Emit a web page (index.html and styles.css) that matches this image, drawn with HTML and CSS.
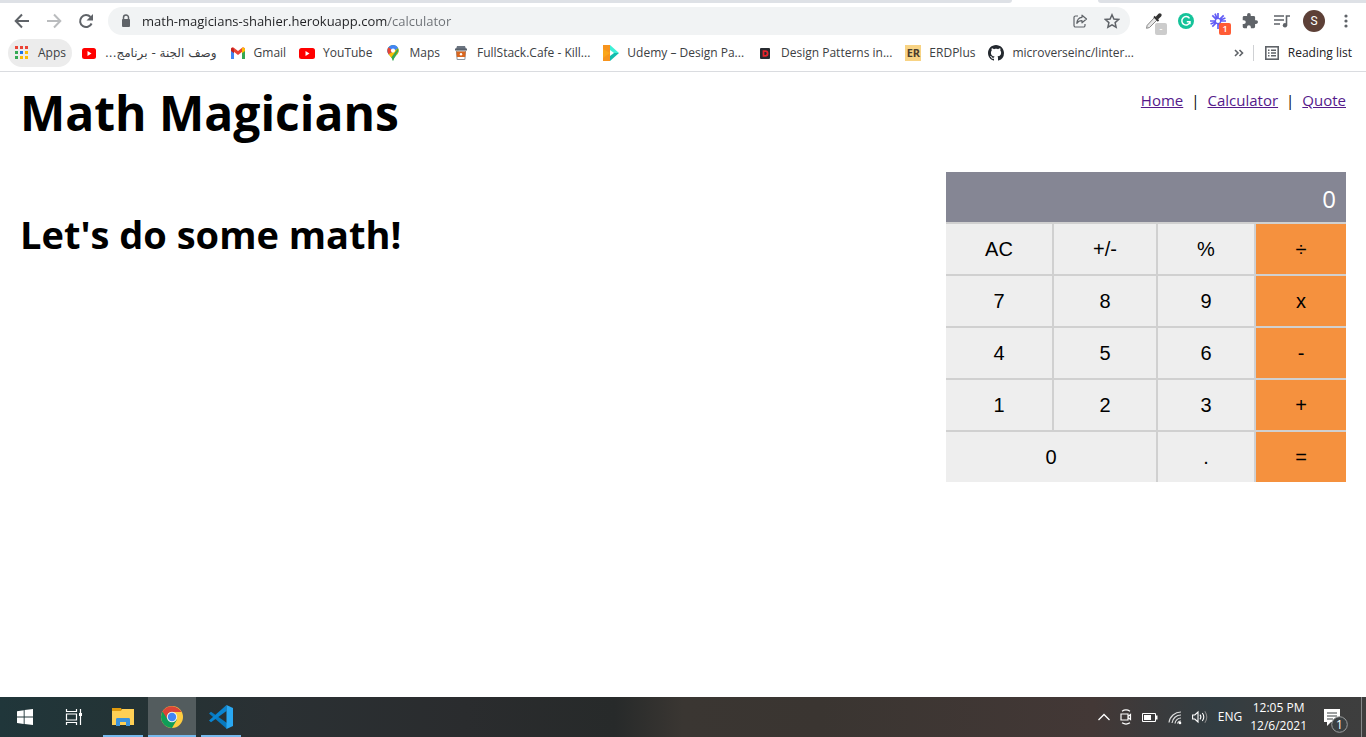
FILE: index.html
```html
<!DOCTYPE html>
<html lang="en">
<head>
<meta charset="utf-8">
<title>Math Magicians</title>
<link rel="stylesheet" href="styles.css">
</head>
<body>
<div class="screen">
  <header class="browser">
    <div class="tabstrip"></div>
    <div class="toolbar">
      <div class="nav-buttons">
        <button class="icon-btn" aria-label="Back"><svg width="16" height="16" viewBox="0 0 16 16"><path d="M15 8H2M8 1.500 1.700 8 8 14.500" fill="none" stroke="#5f6368" stroke-width="2"/></svg></button>
        <button class="icon-btn" aria-label="Forward"><svg width="16" height="16" viewBox="0 0 16 16"><path d="M1 8h13M8 1.500 14.300 8 8 14.500" fill="none" stroke="#babcbe" stroke-width="2"/></svg></button>
        <button class="icon-btn" aria-label="Reload"><svg width="16" height="16" viewBox="0 0 16 16"><path d="M13.600 10.500A6 6 0 1 1 12.500 4" fill="none" stroke="#5f6368" stroke-width="2"/><path d="M15 1v6.500H8.500z" fill="#5f6368"/></svg></button>
      </div>
      <div class="omnibox">
        <svg width="16" height="16" viewBox="0 0 16 16"><rect x="4" y="6" width="8" height="8" rx="1" fill="#5f6368"/><path d="M5.500 7V4.500a2.500 2.500 0 0 1 5 0V7" fill="none" stroke="#5f6368" stroke-width="1.500"/></svg>
        <input class="url" type="text" aria-label="Address" value="math-magicians-shahier.herokuapp.com/calculator">
        <button class="icon-btn" aria-label="Share"><svg width="16" height="16" viewBox="0 0 16 16"><path d="M6 3H3.500A1.500 1.500 0 0 0 2 4.500v8A1.500 1.500 0 0 0 3.500 14h8a1.500 1.500 0 0 0 1.500-1.500V11M10 2.200 14.500 6 10 9.800V7.700C7.500 7.700 6 8.500 4.800 10.300 5 7 7 4.600 10 4.300z" fill="none" stroke="#5f6368" stroke-width="1.200" stroke-linejoin="round"/></svg></button>
        <button class="icon-btn" aria-label="Bookmark this page"><svg width="16" height="16" viewBox="0 0 16 16"><path d="m8 1.800 1.900 4.300 4.700.4-3.500 3.100 1 4.600L8 11.800l-4.100 2.400 1-4.600-3.500-3.100 4.700-.4z" fill="none" stroke="#5f6368" stroke-width="1.500"/></svg></button>
      </div>
      <div class="extensions">
        <button class="icon-btn" aria-label="Color picker"><svg width="20" height="20" viewBox="0 0 20 20"><path d="m10.500 6.500 2.500 2.500-7.500 7.500-3 .8.700-3z" fill="#e8e8e8" stroke="#888" stroke-width="1"/><path d="m10 5.500 4.500 4.500" stroke="#333" stroke-width="1.800"/><path d="m11.500 6 3-3.200a1.800 1.800 0 0 1 2.600 2.600l-3.200 3z" fill="#333"/></svg><span class="badge badge-gray">-</span></button>
        <button class="icon-btn" aria-label="Grammarly"><svg width="16" height="16" viewBox="0 0 16 16"><circle cx="8" cy="8" r="8" fill="#15c39a"/><path d="M11.500 5.400A4.200 4.200 0 1 0 12 9.200M8.800 8.800h3.200v2.400" fill="none" stroke="#fff" stroke-width="1.500"/></svg></button>
        <button class="icon-btn" aria-label="Loom"><svg width="16" height="16" viewBox="0 0 16 16"><path d="M8 0v16M0 8h16M2.300 2.300l11.400 11.400M13.700 2.300 2.300 13.700M5 .6l6 14.800M.6 11 15.400 5" stroke="#625df5" stroke-width="1.700"/><circle cx="8" cy="8" r="3.300" fill="#625df5"/><circle cx="8" cy="8" r="2" fill="#fff"/></svg><span class="badge badge-red">1</span></button>
        <button class="icon-btn" aria-label="Extensions"><svg width="16" height="16" viewBox="1 1 22 22"><path d="M20.500 11H19V7a2 2 0 0 0-2-2h-4V3.500a2.500 2.500 0 0 0-5 0V5H4a2 2 0 0 0-2 2v3.800h1.500a2.700 2.700 0 0 1 0 5.400H2V20a2 2 0 0 0 2 2h3.800v-1.500a2.700 2.700 0 0 1 5.400 0V22H17a2 2 0 0 0 2-2v-4h1.500a2.500 2.500 0 0 0 0-5z" fill="#5f6368"/></svg></button>
        <button class="icon-btn" aria-label="Media controls"><svg width="18" height="16" viewBox="0 0 18 16"><path d="M1 3h10M1 7h10M1 11h6M13.500 12V3H17" fill="none" stroke="#5f6368" stroke-width="1.600"/><circle cx="12" cy="12.300" r="2.200" fill="#5f6368"/></svg></button>
        <button class="icon-btn" aria-label="Profile"><span class="avatar">S</span></button>
        <button class="icon-btn" aria-label="Menu"><svg width="4" height="16" viewBox="0 0 4 16"><g fill="#5f6368"><circle cx="2" cy="3" r="1.600"/><circle cx="2" cy="8" r="1.600"/><circle cx="2" cy="13" r="1.600"/></g></svg></button>
      </div>
    </div>
    <nav class="bookmarks" aria-label="Bookmarks">
      <a class="bookmark apps" href="#"><svg width="16" height="16" viewBox="0 0 16 16"><path d="M1 1h3v3H1zM6 1h3v3H6zM11 1h3v3h-3z" fill="#ea4335"/><path d="M1 6h3v3H1zM1 11h3v3H1z" fill="#34a853"/><path d="M6 6h3v3H6z" fill="#1a73e8"/><path d="M11 6h3v3h-3zM6 11h3v3H6zM11 11h3v3h-3z" fill="#fbbc04"/></svg>Apps</a>
      <a class="bookmark" href="#"><svg width="16" height="16" viewBox="0 0 16 16"><rect x="1" y="3" width="14" height="11" rx="2.500" fill="#f00"/><path d="m6.500 6 4 2.500-4 2.500z" fill="#fff"/></svg><span class="arabic" dir="rtl" lang="ar">وصف الجنة - برنامج...</span></a>
      <a class="bookmark" href="#"><svg width="16" height="16" viewBox="0 0 16 16"><path d="M1 14V4l3 2v8z" fill="#4285f4"/><path d="M12 14V6l3-2v10z" fill="#34a853"/><path d="M1 4.500C1 2.500 3 2 4.200 3L8 6l3.800-3C13 2 15 2.500 15 4.500L8 10z" fill="#ea4335"/><path d="M12 2.900c1.300-.9 3 0 3 1.600V6l-3 2.300z" fill="#fbbc04"/><path d="M1 4.500C1 3.500 1.500 2.800 2.300 2.600L4 4v4.300L1 6z" fill="#c5221f"/></svg>Gmail</a>
      <a class="bookmark" href="#"><svg width="16" height="16" viewBox="0 0 16 16"><rect y="3" width="16" height="11" rx="2.500" fill="#f00"/><path d="m6.500 6 4 2.500-4 2.500z" fill="#fff"/></svg>YouTube</a>
      <a class="bookmark" href="#"><svg width="16" height="16" viewBox="0 0 16 16"><path d="M8 0a5.600 5.600 0 0 1 5.600 5.700c0 3.800-4 4.800-5.600 10.300C6.800 11 2.400 9.500 2.400 5.700A5.600 5.600 0 0 1 8 0z" fill="#34a853"/><path d="M8 0a5.600 5.600 0 0 1 5.100 3.300L3.700 9.400C2.900 8.300 2.400 7.200 2.400 5.700A5.600 5.600 0 0 1 8 0z" fill="#4285f4"/><path d="M3.600 2.200 8 5.700 3.700 9.400C1.900 7 2 4 3.600 2.200z" fill="#ea4335"/><path d="m3.700 9.300 9.400-6c1 2.200.4 4.300-.8 6L6.500 13z" fill="#fbbc04"/><path d="M13 3.300c1.700 4.500-3.300 6.200-5 12.700-.3-1.500-.9-2.700-1.600-3.700z" fill="#34a853"/><circle cx="8" cy="5.600" r="2.100" fill="#fff"/></svg>Maps</a>
      <a class="bookmark" href="#"><svg width="16" height="16" viewBox="0 0 16 16"><path d="M4 1h8l1 3H3z" fill="#6b7480"/><path d="M2 3.500h12v2H2z" fill="#59616c"/><path d="M3.500 6h9l-.6 8.500H4.100z" fill="#fff" stroke="#8c929b"/><path d="M3.300 6.500h9.400l-.5 5.500H3.800z" fill="#d9661f"/><circle cx="8" cy="9.300" r="1.200" fill="#fff"/></svg>FullStack.Cafe - Kill...</a>
      <a class="bookmark" href="#"><svg width="16" height="16" viewBox="0 0 16 16"><path d="M0 0h7v16H0z" fill="#f7941d"/><path d="m0 4 7 4-7 5z" fill="#faa61a"/><path d="m7 0 9 8H11L7 5z" fill="#3ef0d7"/><path d="M7 16 16 8h-5l-4 3z" fill="#12bdae"/></svg>Udemy – Design Pa...</a>
      <a class="bookmark" href="#"><svg width="16" height="16" viewBox="0 0 16 16"><rect x="3" y="3" width="10" height="11" rx="1" fill="#272b30"/><path d="M6.500 6.200h1.800a2.300 2.300 0 0 1 0 4.600H6.500z" fill="none" stroke="#e8242b" stroke-width="1.800"/></svg>Design Patterns in...</a>
      <a class="bookmark" href="#"><span class="erd">ER</span>ERDPlus</a>
      <a class="bookmark" href="#"><svg width="16" height="16" viewBox="0 0 16 16"><path d="M8 0C3.580 0 0 3.580 0 8c0 3.540 2.290 6.530 5.470 7.590.4.070.55-.17.55-.38 0-.19-.01-.82-.01-1.490-2.010.37-2.530-.49-2.690-.94-.09-.23-.48-.94-.82-1.130-.28-.15-.68-.52-.01-.53.63-.01 1.080.58 1.230.82.72 1.210 1.870.87 2.330.66.07-.52.28-.87.51-1.070-1.780-.2-3.640-.89-3.640-3.950 0-.87.31-1.590.82-2.150-.08-.2-.36-1.020.08-2.120 0 0 .67-.21 2.200.82.64-.18 1.320-.27 2-.27s1.360.09 2 .27c1.530-1.040 2.200-.82 2.200-.82.44 1.100.16 1.920.08 2.120.51.56.82 1.270.82 2.150 0 3.070-1.870 3.750-3.650 3.950.29.25.54.73.54 1.480 0 1.070-.01 1.930-.01 2.200 0 .21.15.46.55.38A8.010 8.010 0 0 0 16 8c0-4.420-3.580-8-8-8z" fill="#24292f"/></svg>microverseinc/linter...</a>
      <div class="bookmarks-end">
        <button class="icon-btn" aria-label="More bookmarks"><svg width="10" height="8" viewBox="0 0 10 8"><path d="m1 1 3 3-3 3m4.500-6 3 3-3 3" fill="none" stroke="#5f6368" stroke-width="1.600"/></svg></button>
        <button class="reading"><svg width="16" height="16" viewBox="0 0 16 16"><rect x="1.800" y="1.800" width="12.400" height="12.400" fill="none" stroke="#5f6368" stroke-width="1.600"/><path d="M4 5.200h1.500M4 8h1.500M4 10.800h1.500M7 5.200h5M7 8h5M7 10.800h5" stroke="#5f6368" stroke-width="1.500"/></svg>Reading list</button>
      </div>
    </nav>
  </header>

  <main class="page">
    <div class="page-head">
      <h1 class="title">Math Magicians</h1>
      <nav class="links" aria-label="Pages"><a href="#">Home</a><span>|</span><a href="#">Calculator</a><span>|</span><a href="#">Quote</a></nav>
    </div>
    <div class="page-body">
      <h2 class="subtitle">Let's do some math!</h2>
      <section class="calculator" aria-label="Calculator">
        <output class="display">0</output>
        <button class="key">AC</button><button class="key">+/-</button><button class="key">%</button><button class="key op">÷</button>
        <button class="key">7</button><button class="key">8</button><button class="key">9</button><button class="key op">x</button>
        <button class="key">4</button><button class="key">5</button><button class="key">6</button><button class="key op">-</button>
        <button class="key">1</button><button class="key">2</button><button class="key">3</button><button class="key op">+</button>
        <button class="key wide">0</button><button class="key">.</button><button class="key op">=</button>
      </section>
    </div>
  </main>

  <footer class="taskbar">
    <div class="tasks">
      <button class="task" aria-label="Start"><svg width="16" height="16" viewBox="0 0 16 16"><path d="M0 2.200 6.700 1.200v6.400H0zM7.600 1.100 16 0v7.600H7.600zM0 8.500h6.700v6.400L0 13.900zM7.600 8.500H16V16l-8.400-1.100z" fill="#fff"/></svg></button>
      <button class="task" aria-label="Task view"><svg width="18" height="16" viewBox="0 0 18 16"><path d="M1.500 0v2.500h10V0M1.500 16v-2.500h10V16M1.500 5h10v6h-10zM15.500 0v16" fill="none" stroke="#fff" stroke-width="1.200"/><path d="M14 4h3v3h-3z" fill="#fff"/></svg></button>
      <button class="task running" aria-label="File Explorer"><svg width="22" height="20" viewBox="0 0 22 20"><path d="M0 1h9l1 2v3H0z" fill="#e09b0d"/><path d="M0 4h9l1-2h12v16H0z" fill="#ffd055"/><path d="M4 19v-6.500C4 11.500 4.500 11 5.500 11h11c1 0 1.500.5 1.500 1.500V19h-4v-4H8v4z" fill="#3d93dc"/></svg></button>
      <button class="task running active" aria-label="Chrome"><svg width="22" height="22" viewBox="0 0 22 22"><circle cx="11" cy="11" r="11" fill="#ffcd40"/><path d="M11 11 1.500 5.500A11 11 0 0 0 11 22l5-8.500z" fill="#0f9d58"/><path d="M1.500 5.500A11 11 0 0 1 20.500 6H11a5 5 0 0 0-4.500 7.300z" fill="#db4437"/><circle cx="11" cy="11" r="5.200" fill="#f1f1f1"/><circle cx="11" cy="11" r="4.200" fill="#4285f4"/></svg></button>
      <button class="task running" aria-label="Visual Studio Code"><svg width="24" height="24" viewBox="0 0 24 24"><path d="M0 8.500 2 6.700 18 18v6z" fill="#0879be"/><path d="M0 15.500 17.500 0v6L2 17.300z" fill="#0a84d0"/><path d="M17.500 0 24 3v18l-6.500 3z" fill="#29a8f2"/></svg></button>
    </div>
    <div class="tray">
      <button class="tray-btn" aria-label="Hidden icons"><svg width="12" height="16" viewBox="0 0 12 16"><path d="m.500 11 5.500-5.500L11.500 11" fill="none" stroke="#fff" stroke-width="1.300"/></svg></button>
      <button class="tray-btn" aria-label="Meet now"><svg width="12" height="16" viewBox="0 0 12 16"><path d="M1 5h7v6H1zM8 7.500 10.500 5.500v5L8 8.500M2 2.200q4-2.500 8 0M2 13.800q4 2.500 8 0" fill="none" stroke="#fff" stroke-width="1.200"/></svg></button>
      <button class="tray-btn" aria-label="Battery"><svg width="16" height="16" viewBox="0 0 16 16"><path d="M.500 4.500h13v8H.500z" fill="none" stroke="#fff"/><path d="M2 6h7v5H2zM14 6.500h1.500v4H14z" fill="#fff"/></svg></button>
      <button class="tray-btn" aria-label="Network"><svg width="14" height="16" viewBox="0 0 14 16"><g fill="none" stroke="#ddd" stroke-width="1.200"><path d="M1 13.500A12 12 0 0 1 13 3M4 14A9 9 0 0 1 13 6M7 14.500A6 6 0 0 1 13 9M9.500 14.500A3.500 3.500 0 0 1 13 12"/></g><circle cx="12" cy="14" r="1.300" fill="#fff"/></svg></button>
      <button class="tray-btn" aria-label="Volume"><svg width="16" height="16" viewBox="0 0 16 16"><path d="M.600 6h2.200L6 3v10L2.800 10H.600zM8 5.700q1.800 2.300 0 4.600M10.300 4q3 4 0 8" fill="none" stroke="#fff" stroke-width="1.100"/><path d="M12.800 2.200q4 5.800 0 11.600" fill="none" stroke="#888" stroke-width="1.100"/></svg></button>
      <button class="tray-btn">ENG</button>
      <button class="tray-btn clock"><span>12:05 PM</span><span>12/6/2021</span></button>
      <button class="tray-btn notify" aria-label="Notifications"><svg width="26" height="26" viewBox="0 0 26 26"><path d="M1 1h16v13H8l-4 4v-4H1z" fill="#fff"/><path d="M4 5h10M4 8h10M4 11h6" stroke="#3b4042"/><circle cx="16.500" cy="16.500" r="7.800" fill="#3b4042" stroke="#9b9d9e"/></svg><span class="count">1</span></button>
    </div>
  </footer>
</div>
</body>
</html>
```
FILE: styles.css
```css
* { box-sizing: border-box; }
body { margin: 0; background: #fff; color: #000; font-family: "Open Sans", "Noto Sans", sans-serif; }
button { border: 0; padding: 0; background: none; font: inherit; color: inherit; }
svg { display: block; flex: none; }
.screen { display: flex; flex-direction: column; min-height: 100vh; }

.browser { border-bottom: 1px solid #dadce0; }
.tabstrip { display: flex; gap: 86px; height: 3px; }
.tabstrip::before { content: ""; flex: 1; background: #dee1e6; border-bottom-right-radius: 3px; }
.tabstrip::after { content: ""; width: 268px; background: #dee1e6; border-bottom-left-radius: 3px; }
.toolbar { display: flex; align-items: center; height: 36px; padding: 0 4px 0 14px; }
.nav-buttons { display: flex; gap: 16px; width: 94px; }
.icon-btn { position: relative; display: flex; align-items: center; justify-content: center; }
.omnibox { display: flex; flex: 1; align-items: center; gap: 16px; height: 28px; padding: 0 10px; border-radius: 14px; background: #f1f3f4; }
.url {
  flex: 1; min-width: 0; height: 24px; margin-left: -8px; padding: 0; border: 0; outline: 0;
  font: 13px/24px "Open Sans", sans-serif; color: transparent;
  background: linear-gradient(90deg, #202124 246px, #6b6f74 246px);
  -webkit-background-clip: text; background-clip: text;
}
.extensions { display: grid; grid-template-columns: repeat(7, 32px); align-items: center; padding-left: 8px; }
.badge { position: absolute; top: 50%; left: 50%; width: 12px; height: 12px; margin: 2px 0 0 1px; border-radius: 2px; color: #fff; font-size: 9px; line-height: 12px; font-weight: 600; text-align: center; }
.badge-gray { background: #ccc; }
.badge-red { background: #ff5c35; }
.avatar { width: 22px; height: 22px; border-radius: 50%; background: #5d4037; color: #fff; font: 12px/22px Roboto, sans-serif; }

.bookmarks { display: flex; align-items: center; gap: 13px; height: 32px; padding: 0 14px 4px 8px; font-size: 12px; line-height: 16px; color: #3c4043; }
.bookmark { display: flex; align-items: center; gap: 8px; color: inherit; text-decoration: none; white-space: nowrap; }
.apps { height: 28px; margin-right: -4px; padding: 0 6px; border-radius: 14px; background: #ececec; }
.arabic { font-family: "DejaVu Sans", sans-serif; }
.erd { width: 16px; height: 16px; background: #f8d384; color: #4a3d2c; font-size: 11px; font-weight: 700; text-align: center; }
.bookmarks-end { display: flex; align-items: center; gap: 9px; margin-left: auto; }
.reading { display: flex; align-items: center; gap: 8px; padding-left: 10px; border-left: 1px solid #cfd1d4; color: #202124; white-space: nowrap; }

.page { flex: 1; padding: 6px 20px; }
.page-head { display: flex; justify-content: space-between; align-items: flex-start; height: 94px; }
.title { margin: 0; font-size: 48px; line-height: 70px; }
.links { display: flex; gap: 8px; padding-top: 10px; font-size: 15px; line-height: 24px; }
.links a { color: #551a8b; }
.page-body { display: flex; justify-content: space-between; align-items: flex-start; }
.subtitle { margin: 34px 0 0; font-size: 38px; line-height: 56px; }
.calculator { display: grid; grid-template-columns: 106fr 102fr 96fr 90fr; grid-auto-rows: 50px; gap: 2px; width: 30%; min-width: 400px; background: #d0d0d0; }
.display { grid-column: 1 / -1; padding: 4px 10px 0; background: #858694; color: #fff; font-size: 24px; line-height: 46px; text-align: right; }
.key { background: #eee; color: #000; font: 20px "Liberation Sans", Arial, sans-serif; }
.op { background: #f5913e; }
.wide { grid-column: span 2; }

.taskbar { display: flex; justify-content: space-between; height: 40px; color: #fff; background: linear-gradient(90deg, #20363a, #243335 10%, #2a3033 20%, #2a2c2e 34%, #272a2a 45%, #3a3632 50%, #3a3531 60%, #433836 80%, #323d42 89%, #3c3d3d 94%, #3e3e3e); }
.tasks { display: flex; gap: 1px; padding-left: 1px; }
.task { display: flex; align-items: center; justify-content: center; width: 48px; }
.running { margin: 0 4px; width: 40px; border-top: 2px solid transparent; border-bottom: 2px solid #76b9ed; }
.active { margin: 0; width: 48px; background: #535c5e; border-top-color: #535c5e; }
.tray { display: flex; align-items: center; gap: 10px; margin-right: 4px; padding-right: 12px; border-right: 1px solid #85888a; font-size: 12px; line-height: 18px; }
.tray-btn { position: relative; display: flex; align-items: center; }
.clock { flex-direction: column; margin-left: -2px; }
.notify { margin-left: 6px; padding-top: 8px; }
.count { position: absolute; top: 16px; left: 13px; }
```
